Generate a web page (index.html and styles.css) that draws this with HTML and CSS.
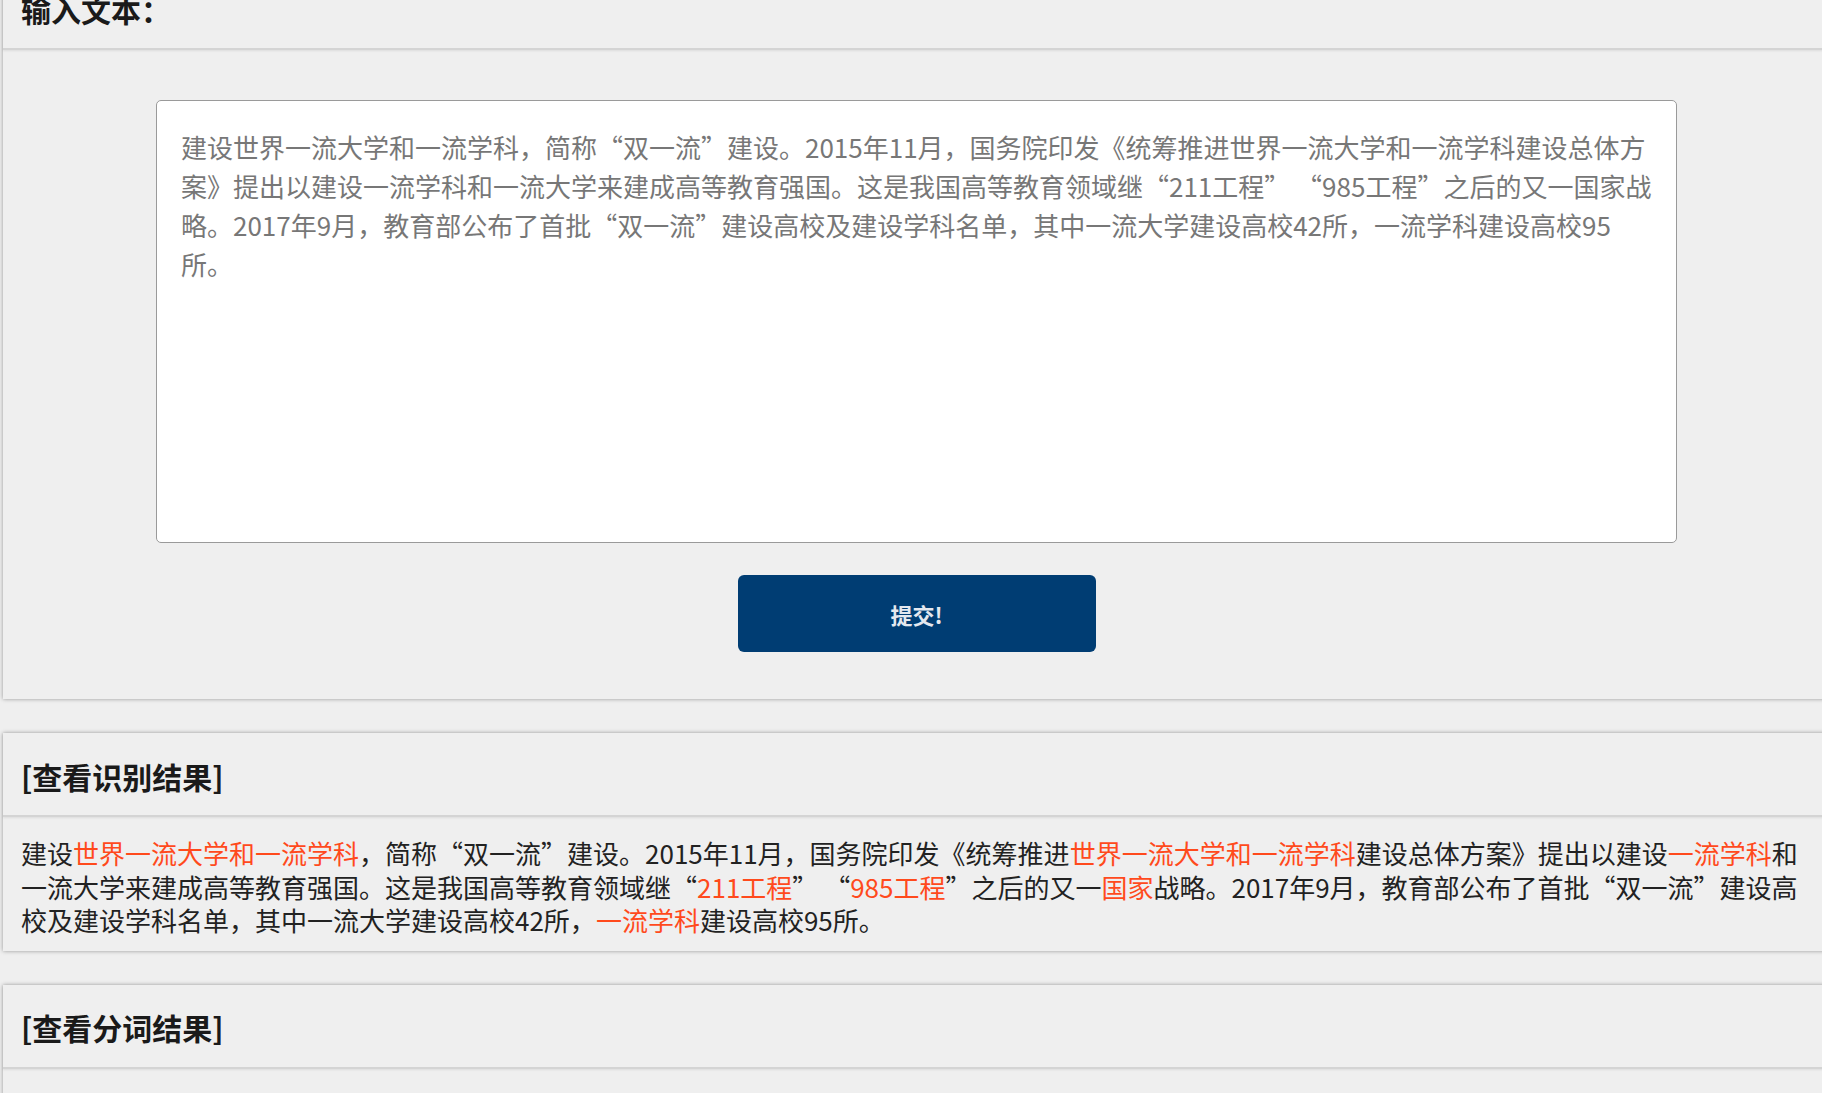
FILE: index.html
```html
<!DOCTYPE html>
<html lang="zh-CN">
<head>
<meta charset="utf-8">
<title>命名实体识别</title>
<link rel="stylesheet" href="styles.css">
</head>
<body>
<div class="page">
  <section class="panel panel-input">
    <div class="panel-head"><h3>输入文本：</h3></div>
    <div class="panel-body input-body">
      <textarea class="text-input">建设世界一流大学和一流学科，简称“双一流”建设。2015年11月，国务院印发《统筹推进世界一流大学和一流学科建设总体方案》提出以建设一流学科和一流大学来建成高等教育强国。这是我国高等教育领域继“211工程” “985工程”之后的又一国家战略。2017年9月，教育部公布了首批“双一流”建设高校及建设学科名单，其中一流大学建设高校42所，一流学科建设高校95所。</textarea>
      <button class="submit" type="button">提交!</button>
    </div>
  </section>

  <section class="panel">
    <div class="panel-head"><h3>[查看识别结果]</h3></div>
    <div class="panel-body result">建设<span class="ent">世界一流大学和一流学科</span>，简称“双一流”建设。2015年11月，国务院印发《统筹推进<span class="ent">世界一流大学和一流学科</span>建设总体方案》提出以建设<span class="ent">一流学科</span>和一流大学来建成高等教育强国。这是我国高等教育领域继“<span class="ent">211工程</span>” “<span class="ent">985工程</span>”之后的又一<span class="ent">国家</span>战略。2017年9月，教育部公布了首批“双一流”建设高校及建设学科名单，其中一流大学建设高校42所，<span class="ent">一流学科</span>建设高校95所。</div>
  </section>

  <section class="panel">
    <div class="panel-head"><h3>[查看分词结果]</h3></div>
    <div class="panel-body result">建设 世界 一流 大学 和 一流 学科 ， 简称 “ 双 一流 ” 建设 。 2015年 11月 ， 国务院 印发 《 统筹 推进 世界 一流 大学 和 一流 学科 建设 总体 方案 》 提出 以 建设 一流 学科</div>
  </section>
</div>
</body>
</html>
```

FILE: styles.css
```css
html, body {
  margin: 0;
  padding: 0;
  background: #efefef;
  overflow: hidden;
}

body {
  font-family: "Noto Sans CJK SC", "Noto Sans", sans-serif;
  color: #222;
}

.page {
  margin-top: -34px;
  padding-left: 3px;
  display: flex;
  flex-direction: column;
  gap: 34px;
}

.panel {
  width: 1827px;
  background: #efefef;
  box-shadow: 0 0 4px rgba(0, 0, 0, 0.38);
}

.panel-head {
  height: 82px;
  display: flex;
  align-items: center;
  padding: 0 18px;
  border-bottom: 2px solid #d4d4d4;
  box-shadow: 0 1px 2px rgba(0, 0, 0, 0.08);
}

.panel-head h3 {
  margin: 0;
  padding-top: 3px;
  font-size: 30px;
  font-weight: 700;
  color: #1a1a1a;
  line-height: 1;
}

.input-body {
  display: flex;
  flex-direction: column;
  align-items: center;
  padding: 50px 0 47px;
}

.text-input {
  box-sizing: border-box;
  width: 1521px;
  height: 443px;
  padding: 26px 24px;
  border: 1px solid #9a9a9a;
  border-radius: 5px;
  background: #fff;
  font-family: "Noto Sans CJK SC", "Noto Sans", sans-serif;
  font-size: 26px;
  line-height: 39px;
  color: #777;
  resize: none;
  outline: none;
}

.submit {
  margin-top: 32px;
  width: 358px;
  height: 77px;
  border: none;
  border-radius: 6px;
  background: #003d73;
  color: #e4e8ef;
  font-family: "Noto Sans CJK SC", "Noto Sans", sans-serif;
  font-size: 22px;
  font-weight: 700;
}

.result {
  padding: 19px 18px 14px;
  font-size: 26px;
  line-height: 33.5px;
  color: #222;
}

.ent {
  color: #ff4a1c;
}
```
